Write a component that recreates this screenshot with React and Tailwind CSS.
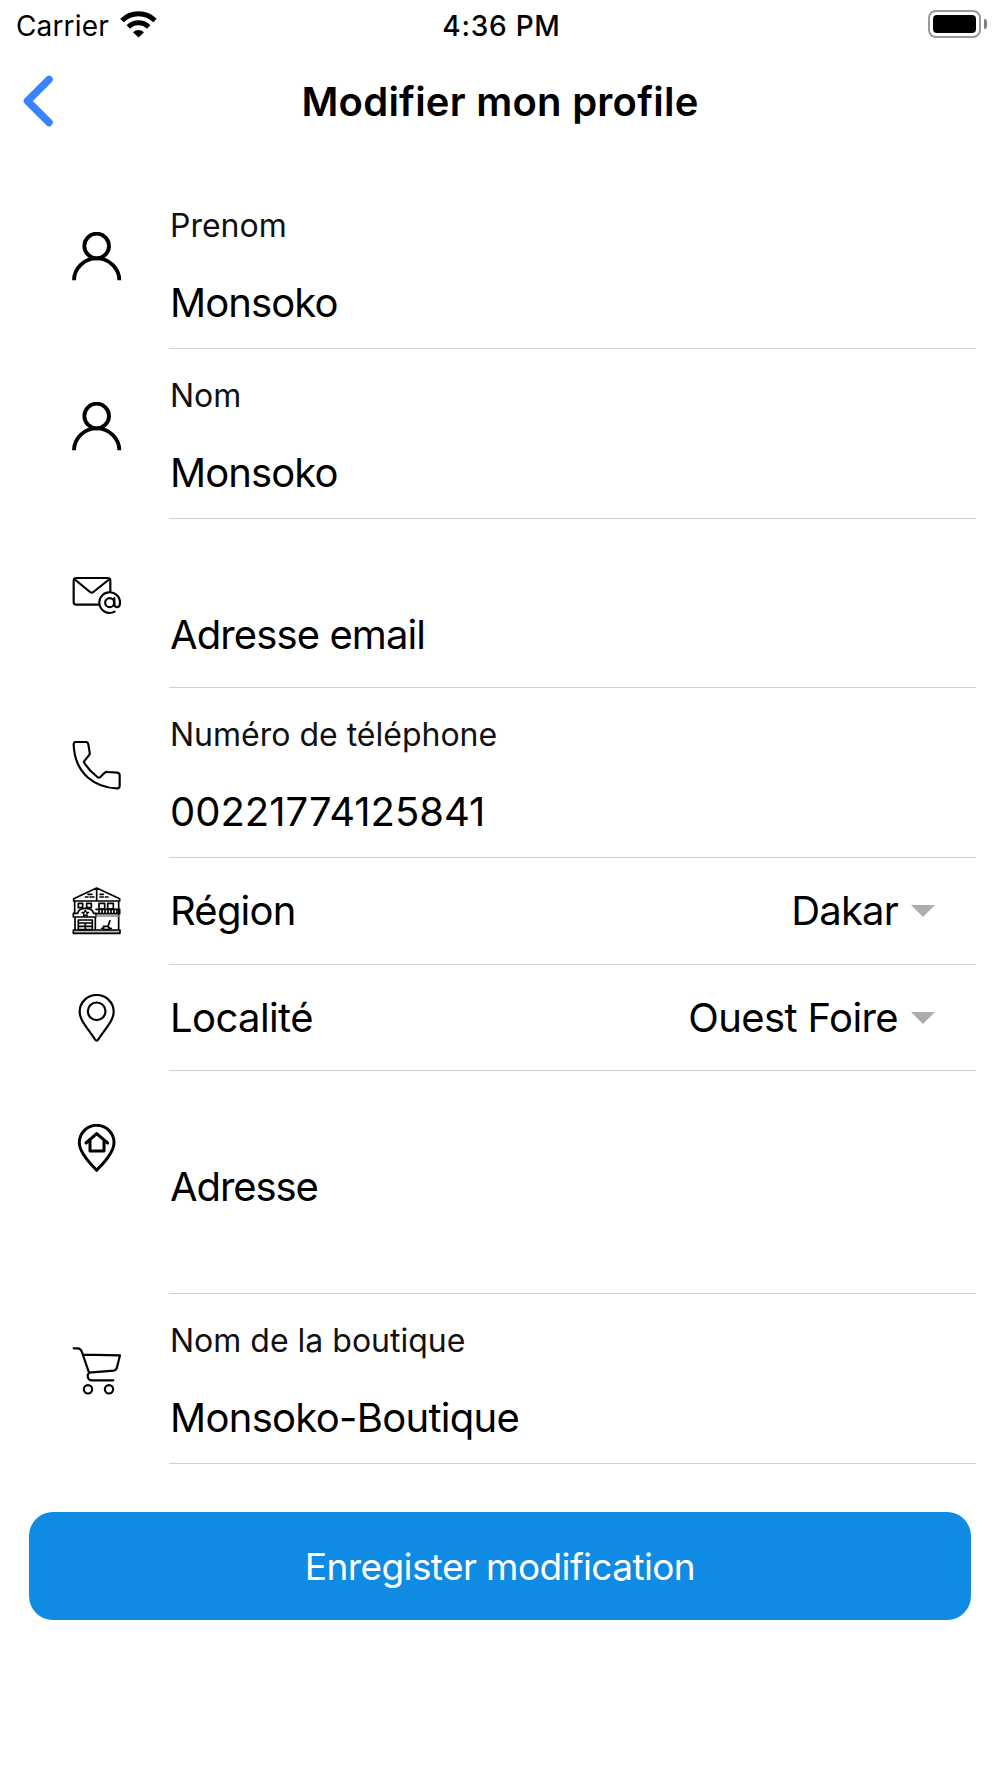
const Svg = ({ children, stroke = 6.5 }) => (
  <svg
    className="w-[50px] h-[50px] shrink-0"
    viewBox="0 0 150 150"
    fill="none"
    stroke="#000"
    strokeWidth={stroke}
    strokeLinecap="round"
    strokeLinejoin="round"
  >
    {children}
  </svg>
);

const UserIcon = () => (
  <Svg stroke={11.5}>
    <circle cx="74" cy="42" r="37" />
    <path d="M6 145a68 66 0 0 1 136 0" strokeLinecap="butt" />
  </Svg>
);

const MailIcon = () => (
  <Svg stroke={6.5}>
    <path d="M80 98H13q-8 0-8-8V26q0-8 8-8h94q8 0 8 8v34" />
    <path d="M7 21l47 39q5 4 10 0l49-39" />
    <circle cx="113" cy="92" r="13.5" />
    <path d="M127 78v19c0 12 17 12 17-3a31 31 0 1 0-16 25" />
  </Svg>
);

const PhoneIcon = () => (
  <Svg>
    <path d="M5 10q0-7 6-7h30q7 0 8 7l4 24q1 6-3 10L38 59q-4 4 0 9c12 18 25 30 38 40q5 4 9 0l12-12q5-4 10-3l29 2q7 1 7 8v31q0 9-9 8C75 140 8 103 5 10z" />
  </Svg>
);

const HouseIcon = () => (
  <Svg stroke={5}>
    <path d="M5 35L74 3l69 32v7H5zM74 4v38M48 22h12M40 30h8M54 30h12M84 22h10M84 30h10M100 30h8" />
    <path d="M8 42v38M140 42v88M9 92v38M70 92v38" />
    <path d="M19 49h13v13H19zM44 49h14v13H44zM81 49h17v17H81zM107 49h17v17h-17z" />
    <path d="M4 79h13c4-20 43-20 48 0h7v11H4z" fill="#fff" />
    <path d="M40 69l3 7h7l-6 5 2 7-6-4-6 4 2-7-6-5h7z" strokeWidth="3.5" />
    <path d="M72 67h71v13H72M81 67v13M90 67v13M99 67v13M108 67v13M117 67v13M126 67v13M135 67v13" />
    <path d="M72 87h68" stroke="#888" />
    <path d="M4 129h140v10H4z" fill="#bbb" />
    <path d="M19 99h42v29H19zM19 108h42M19 118h42M40 108v20" />
    <path d="M114 101l-6 17H94M96 118l-3 8M108 118l6 7M89 124q14 8 29 0" />
  </Svg>
);

const PinIcon = () => (
  <Svg>
    <path d="M74 140c-3 0-8-9-14-17C41 96 23 76 23 53a51 50 0 0 1 102 0c0 23-18 43-37 70-6 8-11 17-14 17z" />
    <circle cx="74" cy="52" r="26.5" />
  </Svg>
);

const AddressIcon = () => (
  <Svg stroke={9}>
    <path d="M74 139C64 127 22 90 22 56a52 52 0 0 1 104 0c0 34-42 71-52 83z" />
    <path d="M42 57l32-28 33 28M54 50v31h42V50" />
  </Svg>
);

const CartIcon = () => (
  <Svg>
    <path d="M5 4h12q8 0 12 9l22 64M33 23l111 2-9 36q-2 9-10 10l-74 6c-7 8-5 23 9 23h64" />
    <circle cx="48" cy="127" r="12.5" />
    <circle cx="111" cy="127" r="12.5" />
  </Svg>
);

const StatusBar = () => (
  <div className="h-12 flex items-center justify-between pl-[16px] pr-[13px] text-[28px] leading-[48px]">
    <div className="flex-1 flex items-center">
      <span className="w-[104px] pt-[3px] tracking-[0.15px]">Carrier</span>
      <svg className="w-[37px] h-[28px]" viewBox="0 0 37 28" fill="none" stroke="#000" strokeWidth="5">
        <path d="M2 10.500a23.500 23.500 0 0 1 33 0" />
        <path d="M8.300 17a14.500 14.500 0 0 1 20.400 0" />
        <path d="M18.500 27.500l-5.500-5.300a8 8 0 0 1 11 0z" fill="#000" stroke="none" />
      </svg>
    </div>
    <span className="font-medium pt-[3px] tracking-[0.75px]">4:36 PM</span>
    <div className="flex-1 flex items-center justify-end gap-[3px]">
      <div className="w-[53px] h-[28px] rounded-[8px] border-2 border-[#999] p-[3px]">
        <div className="w-full h-full rounded-[4px] bg-black" />
      </div>
      <div className="w-[3px] h-[10px] rounded-r-full bg-[#808080]" />
    </div>
  </div>
);

const Header = () => (
  <div className="h-[131px] flex px-[19px] pt-[27px]">
    <button className="w-[40px] h-[54px] flex items-center">
      <svg className="w-[36px] h-[54px]" viewBox="0 0 36 54" fill="none" stroke="#3a82ff" strokeWidth="7.500" strokeLinecap="round" strokeLinejoin="round">
        <path d="M30 4.500L8.500 26 30 47.500" />
      </svg>
    </button>
    <h1 className="flex-1 text-center text-[40px] leading-[54px] font-semibold tracking-[0.25px]">Modifier mon profile</h1>
    <div className="w-[40px]" />
  </div>
);

const fields = [
  { icon: <UserIcon />, label: 'Prenom', value: 'Monsoko', size: 'h-[170px]', spacing: 'tracking-[-0.9px]' },
  { icon: <UserIcon />, label: 'Nom', value: 'Monsoko', size: 'h-[170px]', spacing: 'tracking-[-0.9px]' },
  { icon: <MailIcon />, placeholder: 'Adresse email', size: 'h-[169px]', spacing: 'tracking-[-0.9px]' },
  { icon: <PhoneIcon />, label: 'Numéro de téléphone', value: '00221774125841', size: 'h-[170px]', spacing: 'tracking-normal' },
  { icon: <HouseIcon />, title: 'Région', selected: 'Dakar', size: 'h-[107px]', spacing: 'tracking-[-0.8px]' },
  { icon: <PinIcon />, title: 'Localité', selected: 'Ouest Foire', size: 'h-[106px]', spacing: 'tracking-[-0.6px]' },
  { icon: <AddressIcon />, placeholder: 'Adresse', size: 'h-[223px]', spacing: 'tracking-[-1.1px]' },
  { icon: <CartIcon />, label: 'Nom de la boutique', value: 'Monsoko-Boutique', size: 'h-[170px]', spacing: 'tracking-[-0.7px]' },
];

const Field = ({ field }) => (
  <div className={`flex pl-[72px] pr-[24px] ${field.size}`}>
    <div className={`w-[97px] ${field.title ? 'pt-[29px]' : 'pt-[53px]'}`}>{field.icon}</div>
    {field.title ? (
      <div className={`flex-1 flex items-center border-b border-[#d0d0d3] pl-[1px] pr-[41px] text-[40px] leading-[48px] ${field.spacing}`}>
        <span className="flex-1">{field.title}</span>
        <span>{field.selected}</span>
        <svg className="w-[24px] h-[12px] ml-[13px]" viewBox="0 0 24 12" fill="#adadad">
          <path d="M0 0h24L12 12z" />
        </svg>
      </div>
    ) : (
      <div className="flex-1 border-b border-[#d0d0d3] pl-[1px]">
        {field.label && <p className="pt-[27px] text-[32px] leading-[40px] text-[#111]">{field.label}</p>}
        <p className={`text-[40px] leading-[48px] ${field.spacing} ${field.label ? 'pt-[33px]' : 'pt-[92px]'}`}>
          {field.value || field.placeholder}
        </p>
      </div>
    )}
  </div>
);

const App = () => (
  <div className="w-[1000px] h-[1778px] bg-white text-black font-[Inter,sans-serif] whitespace-nowrap overflow-hidden">
    <StatusBar />
    <Header />
    {fields.map((field, i) => (
      <Field key={i} field={field} />
    ))}
    <div className="px-[29px] pt-[48px]">
      <button className="w-full h-[108px] rounded-[24px] bg-[#108be4] pt-[2px] text-white text-[37px] leading-[48px] tracking-[-0.6px]">
        Enregister modification
      </button>
    </div>
  </div>
);

export default App;
